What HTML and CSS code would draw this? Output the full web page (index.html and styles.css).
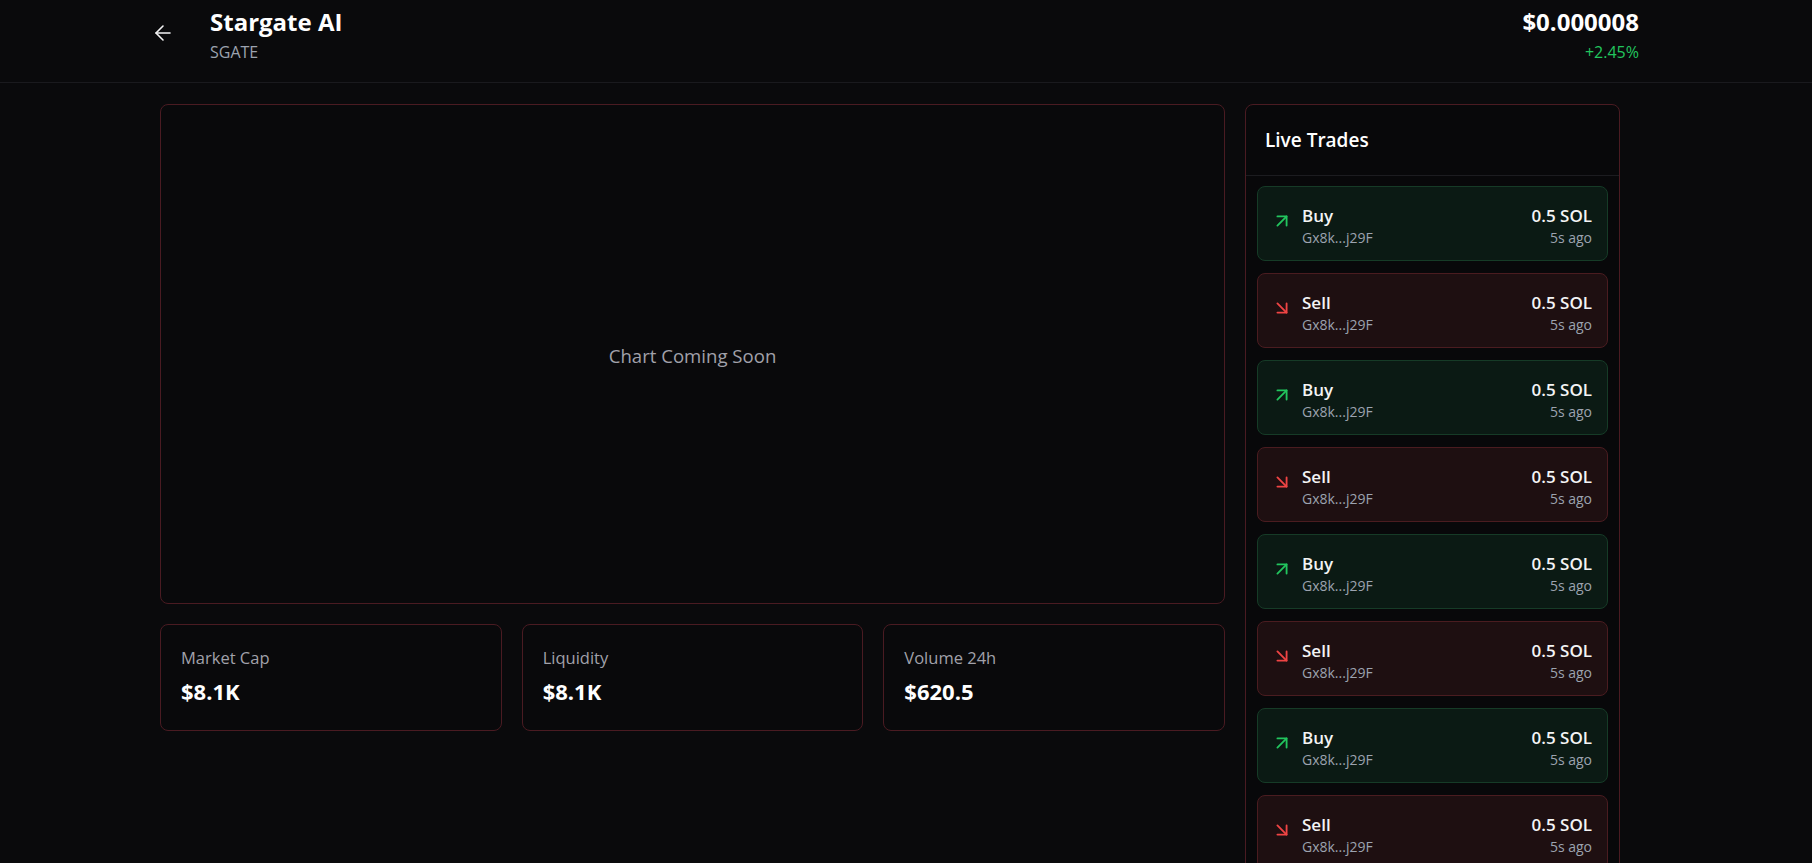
FILE: index.html
```html
<!DOCTYPE html>
<html lang="en">
<head>
<meta charset="utf-8">
<title>Stargate AI</title>
<link rel="stylesheet" href="styles.css">
</head>
<body>
<header class="topbar">
  <div class="token">
    <button class="back" aria-label="Back">
      <svg viewBox="0 0 24 24" width="24" height="24" fill="none" stroke="currentColor" stroke-width="1.6" stroke-linecap="round" stroke-linejoin="round"><path d="m12 19-7-7 7-7"/><path d="M19 12H5"/></svg>
    </button>
    <div class="token-names">
      <div class="token-title">Stargate AI</div>
      <div class="token-symbol">SGATE</div>
    </div>
  </div>
  <div class="price">
    <div class="price-value">$0.000008</div>
    <div class="price-change">+2.45%</div>
  </div>
</header>

<main class="layout">
  <section class="left">
    <div class="chart card">
      <span class="chart-empty">Chart Coming Soon</span>
    </div>
    <div class="stats">
      <div class="stat card">
        <div class="stat-label">Market Cap</div>
        <div class="stat-value">$8.1K</div>
      </div>
      <div class="stat card">
        <div class="stat-label">Liquidity</div>
        <div class="stat-value">$8.1K</div>
      </div>
      <div class="stat card">
        <div class="stat-label">Volume 24h</div>
        <div class="stat-value">$620.5</div>
      </div>
    </div>
  </section>

  <aside class="trades card">
    <div class="trades-head">Live Trades</div>
    <div class="trades-list">
      <div class="trade buy">
        <svg class="trade-icon" viewBox="0 0 24 24" fill="none" stroke="currentColor" stroke-width="2" stroke-linecap="round" stroke-linejoin="round"><path d="M7 7h10v10"/><path d="M7 17 17 7"/></svg>
        <div class="trade-main"><div class="trade-type">Buy</div><div class="trade-sub">Gx8k...j29F</div></div>
        <div class="trade-side"><div class="trade-amt">0.5 SOL</div><div class="trade-sub">5s ago</div></div>
      </div>
      <div class="trade sell">
        <svg class="trade-icon" viewBox="0 0 24 24" fill="none" stroke="currentColor" stroke-width="2" stroke-linecap="round" stroke-linejoin="round"><path d="m7 7 10 10"/><path d="M17 7v10H7"/></svg>
        <div class="trade-main"><div class="trade-type">Sell</div><div class="trade-sub">Gx8k...j29F</div></div>
        <div class="trade-side"><div class="trade-amt">0.5 SOL</div><div class="trade-sub">5s ago</div></div>
      </div>
      <div class="trade buy">
        <svg class="trade-icon" viewBox="0 0 24 24" fill="none" stroke="currentColor" stroke-width="2" stroke-linecap="round" stroke-linejoin="round"><path d="M7 7h10v10"/><path d="M7 17 17 7"/></svg>
        <div class="trade-main"><div class="trade-type">Buy</div><div class="trade-sub">Gx8k...j29F</div></div>
        <div class="trade-side"><div class="trade-amt">0.5 SOL</div><div class="trade-sub">5s ago</div></div>
      </div>
      <div class="trade sell">
        <svg class="trade-icon" viewBox="0 0 24 24" fill="none" stroke="currentColor" stroke-width="2" stroke-linecap="round" stroke-linejoin="round"><path d="m7 7 10 10"/><path d="M17 7v10H7"/></svg>
        <div class="trade-main"><div class="trade-type">Sell</div><div class="trade-sub">Gx8k...j29F</div></div>
        <div class="trade-side"><div class="trade-amt">0.5 SOL</div><div class="trade-sub">5s ago</div></div>
      </div>
      <div class="trade buy">
        <svg class="trade-icon" viewBox="0 0 24 24" fill="none" stroke="currentColor" stroke-width="2" stroke-linecap="round" stroke-linejoin="round"><path d="M7 7h10v10"/><path d="M7 17 17 7"/></svg>
        <div class="trade-main"><div class="trade-type">Buy</div><div class="trade-sub">Gx8k...j29F</div></div>
        <div class="trade-side"><div class="trade-amt">0.5 SOL</div><div class="trade-sub">5s ago</div></div>
      </div>
      <div class="trade sell">
        <svg class="trade-icon" viewBox="0 0 24 24" fill="none" stroke="currentColor" stroke-width="2" stroke-linecap="round" stroke-linejoin="round"><path d="m7 7 10 10"/><path d="M17 7v10H7"/></svg>
        <div class="trade-main"><div class="trade-type">Sell</div><div class="trade-sub">Gx8k...j29F</div></div>
        <div class="trade-side"><div class="trade-amt">0.5 SOL</div><div class="trade-sub">5s ago</div></div>
      </div>
      <div class="trade buy">
        <svg class="trade-icon" viewBox="0 0 24 24" fill="none" stroke="currentColor" stroke-width="2" stroke-linecap="round" stroke-linejoin="round"><path d="M7 7h10v10"/><path d="M7 17 17 7"/></svg>
        <div class="trade-main"><div class="trade-type">Buy</div><div class="trade-sub">Gx8k...j29F</div></div>
        <div class="trade-side"><div class="trade-amt">0.5 SOL</div><div class="trade-sub">5s ago</div></div>
      </div>
      <div class="trade sell">
        <svg class="trade-icon" viewBox="0 0 24 24" fill="none" stroke="currentColor" stroke-width="2" stroke-linecap="round" stroke-linejoin="round"><path d="m7 7 10 10"/><path d="M17 7v10H7"/></svg>
        <div class="trade-main"><div class="trade-type">Sell</div><div class="trade-sub">Gx8k...j29F</div></div>
        <div class="trade-side"><div class="trade-amt">0.5 SOL</div><div class="trade-sub">5s ago</div></div>
      </div>
    </div>
  </aside>
</main>
</body>
</html>
```

FILE: styles.css
```css
* { box-sizing: border-box; }

html, body {
  margin: 0;
  height: 100%;
  overflow: hidden;
}

body {
  background: #0a0a0c;
  color: #f4f4f5;
  font-family: "Open Sans", "Noto Sans", sans-serif;
}

/* ---------- header ---------- */
.topbar {
  height: 83px;
  padding: 8px 173px 0 151px;
  display: flex;
  justify-content: space-between;
  align-items: flex-start;
  border-bottom: 1px solid #1a1a1e;
}

.token {
  display: flex;
  align-items: flex-start;
}

.back {
  margin-top: 13px;
  margin-right: 35px;
  width: 24px;
  height: 24px;
  padding: 0;
  border: 0;
  background: none;
  color: #f4f4f5;
  display: flex;
}

.token-title,
.price-value {
  font-size: 24px;
  line-height: 28px;
  font-weight: 700;
  color: #ffffff;
}

.token-symbol,
.price-change {
  margin-top: 5px;
  font-size: 16px;
  line-height: 22px;
}

.token-symbol { color: #9ca3af; }

.price { text-align: right; }
.price-change { color: #22c55e; }

/* ---------- layout ---------- */
.layout {
  width: 1620px;
  padding: 21px 0 0 160px;
  display: grid;
  grid-template-columns: 1fr 375px;
  gap: 20px;
  align-items: start;
}

.card {
  border: 1px solid #4a1b22;
  border-radius: 8px;
  background: #09090b;
}

.left {
  display: flex;
  flex-direction: column;
  gap: 20px;
}

.chart {
  height: 500px;
  display: flex;
  align-items: center;
  justify-content: center;
}

.chart-empty {
  font-size: 18.6px;
  color: #a1a1aa;
  margin-top: 2px;
}

.stats {
  display: grid;
  grid-template-columns: repeat(3, 1fr);
  gap: 20px;
}

.stat {
  height: 107px;
  padding: 22px 20px 0;
}

.stat-label {
  font-size: 16.5px;
  line-height: 22px;
  color: #a1a1aa;
}

.stat-value {
  margin-top: 7px;
  font-size: 22px;
  line-height: 30px;
  font-weight: 700;
  color: #ffffff;
}

/* ---------- trades ---------- */
.trades {
  height: 800px;
  background: #08080a;
  overflow: hidden;
}

.trades-head {
  height: 71px;
  padding: 0 19px;
  display: flex;
  align-items: center;
  border-bottom: 1px solid #1c1c20;
  font-size: 19px;
  line-height: 26px;
  font-weight: 600;
  color: #ffffff;
}

.trades-list {
  padding: 10px 11px;
  display: flex;
  flex-direction: column;
  gap: 12px;
}

.trade {
  height: 75px;
  flex: none;
  padding: 0 15px 0 13px;
  display: flex;
  align-items: center;
  border: 1px solid;
  border-radius: 8px;
}

.trade.buy {
  background: #0b1a14;
  border-color: #163b27;
}

.trade.sell {
  background: #1e0f11;
  border-color: #4a1c20;
}

.trade-icon {
  width: 22px;
  height: 22px;
  flex: none;
  margin-top: -6px;
  margin-right: 9px;
}

.buy .trade-icon { color: #22c55e; }
.sell .trade-icon { color: #ef4444; }

.trade-main {
  flex: 1;
  padding-top: 5px;
}

.trade-side {
  text-align: right;
  padding-top: 5px;
}

.trade-type,
.trade-amt {
  font-size: 17px;
  line-height: 24px;
  font-weight: 600;
  color: #f4f4f5;
}

.trade-sub {
  font-size: 14px;
  line-height: 20px;
  color: #9ca3af;
}
```
